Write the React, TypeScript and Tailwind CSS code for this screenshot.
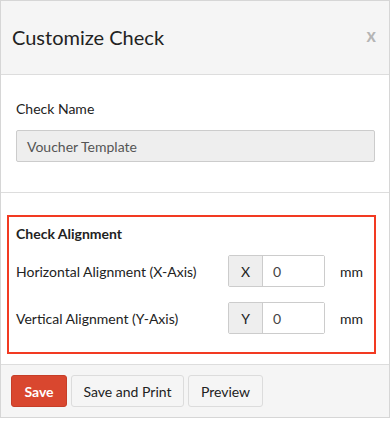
import React from "react";

export default function App() {
  return (
    <div className="relative w-[391px] h-[421px] bg-white" style={{ fontFamily: "Lato, 'Open Sans', sans-serif" }}>
      <div className="w-[390px] border border-[#d6d6d6] bg-white text-[#222]">
        <div className="h-[74px] px-[11px] flex items-center justify-between bg-[#f5f5f5] border-b border-[#dddddd]">
          <span className="text-[20px] text-[#222] -mt-[2px]">Customize Check</span>
          <span className="text-[18px] font-bold text-[#b5b5b5] mr-[2px] leading-none -mt-[6px]">x</span>
        </div>
        <div className="px-[15px] pt-[24px] pb-[30px] border-b border-[#dddddd]">
          <div className="text-[14px] leading-[20px] text-[#222]">Check Name</div>
          <div className="mt-[11px] h-[32px] w-[359px] flex items-center px-[10px] bg-[#eeeeee] border border-[#cccccc] rounded-[2px] text-[14px] text-[#555]">
            Voucher Template
          </div>
        </div>
        <div className="px-[15px] pt-[31px] pb-[30px]">
          <div className="text-[14px] leading-[20px] font-bold text-[#222]">Check Alignment</div>
          <div className="mt-[11px] flex items-center">
            <div className="w-[212px] text-[14px] text-[#222]">Horizontal Alignment (X-Axis)</div>
            <div className="flex h-[32px] w-[97px] border border-[#cccccc] rounded-[2px] text-[14px]">
              <div className="w-[34px] flex items-center justify-center bg-[#eeeeee] border-r border-[#cccccc] text-[#222]">X</div>
              <div className="flex-1 flex items-center pl-[10px] bg-white text-[#444]">0</div>
            </div>
            <div className="ml-[15px] text-[14px] text-[#222]">mm</div>
          </div>
          <div className="mt-[15px] flex items-center">
            <div className="w-[212px] text-[14px] text-[#222]">Vertical Alignment (Y-Axis)</div>
            <div className="flex h-[32px] w-[97px] border border-[#cccccc] rounded-[2px] text-[14px]">
              <div className="w-[34px] flex items-center justify-center bg-[#eeeeee] border-r border-[#cccccc] text-[#222]">Y</div>
              <div className="flex-1 flex items-center pl-[10px] bg-white text-[#444]">0</div>
            </div>
            <div className="ml-[15px] text-[14px] text-[#222]">mm</div>
          </div>
        </div>
        <div className="border-t border-[#dddddd] bg-[#f5f5f5] px-[10px] py-[10px] flex gap-[4px]">
          <button className="h-[32px] w-[56px] rounded-[3px] bg-[#d9472f] text-white text-[14px] font-bold border border-[#c63e28]">Save</button>
          <button className="h-[32px] w-[113px] rounded-[3px] bg-[#f5f5f5] text-[#222] text-[14px] border border-[#dcdcdc]">Save and Print</button>
          <button className="h-[32px] w-[75px] rounded-[3px] bg-[#f5f5f5] text-[#222] text-[14px] border border-[#dcdcdc]">Preview</button>
        </div>
      </div>
      <div className="absolute left-[7px] top-[215px] w-[369px] h-[139px] border-2 border-[#f23a22] pointer-events-none" />
    </div>
  );
}
